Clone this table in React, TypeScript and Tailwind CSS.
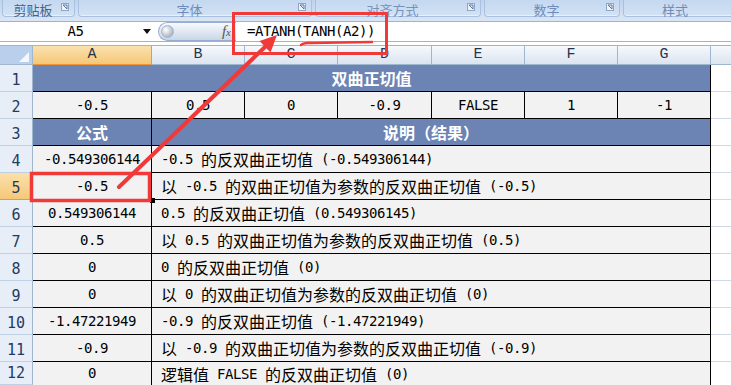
import { Fragment } from 'react'

const MONO = "font-['DejaVu_Sans_Mono','Noto_Sans_CJK_SC',monospace]"
const CJK_SPLIT = /([\u3000-\u303f\u4e00-\u9fff\uff00-\uffef]+)/

const groups = [
  { label: '剪贴板', width: 'w-[73px]', tone: 'text-[#43628d]', launcher: true },
  { label: '字体', width: 'w-[234px]', tone: 'text-[#6f8cb8]', launcher: true },
  { label: '对齐方式', width: 'w-[166px]', tone: 'text-[#7592bd]', launcher: true },
  { label: '数字', width: 'w-[136px]', tone: 'text-[#6f8cb8]', launcher: true },
  { label: '样式', width: 'flex-1 -mr-[10px]', tone: 'text-[#6f8cb8]', launcher: false },
]

const columns = ['A', 'B', 'C', 'D', 'E', 'F', 'G']
const inputs = ['-0.5', '0.5', '0', '-0.9', 'FALSE', '1', '-1']

const results: [string, string][] = [
  ['-0.549306144', '-0.5 的反双曲正切值 (-0.549306144)'],
  ['-0.5', '以 -0.5 的双曲正切值为参数的反双曲正切值 (-0.5)'],
  ['0.549306144', '0.5 的反双曲正切值 (0.549306145)'],
  ['0.5', '以 0.5 的双曲正切值为参数的反双曲正切值 (0.5)'],
  ['0', '0 的反双曲正切值 (0)'],
  ['0', '以 0 的双曲正切值为参数的反双曲正切值 (0)'],
  ['-1.47221949', '-0.9 的反双曲正切值 (-1.47221949)'],
  ['-0.9', '以 -0.9 的双曲正切值为参数的反双曲正切值 (-0.9)'],
  ['0', '逻辑值 FALSE 的反双曲正切值 (0)'],
]

// half-width text in the mono face, CJK runs bumped to full width
function Mixed({ text }: { text: string }) {
  return (
    <>
      {text.split(CJK_SPLIT).map((part, i) =>
        i % 2 === 1 ? (
          <span key={i} className="text-[16px] tracking-normal font-['Noto_Sans_CJK_SC',sans-serif]">
            {part}
          </span>
        ) : (
          <span key={i} className="whitespace-pre">
            {part}
          </span>
        )
      )}
    </>
  )
}

function Launcher() {
  return (
    <svg className="w-[8px] h-[8px] mr-[5px] mt-[3px]" viewBox="0 0 8 8">
      <rect x="0.5" y="0.5" width="7" height="7" fill="#eef3fa" stroke="#8ea6c6" />
      <path d="M2 2h4v4" fill="none" stroke="#5d7699" />
      <path d="M2 2l4 4" stroke="#5d7699" />
    </svg>
  )
}

function RowNum({ n, active }: { n: number; active?: boolean }) {
  return (
    <div
      className={
        active
          ? 'flex items-end justify-center pb-[3px] border-r border-b border-[#f29536] bg-linear-to-b from-[#fbe0ab] to-[#f5c878] text-[15px] leading-[15px] text-[#1f3b5f]'
          : 'flex items-end justify-center pb-[3px] border-r border-b border-r-[#9eb6ce] border-b-[#c0d1e6] bg-[#e8eef8] text-[15px] leading-[15px] text-[#1f3b5f]'
      }
    >
      {n}
    </div>
  )
}

function Spare({ last }: { last?: boolean }) {
  return <div className={last ? 'bg-white' : 'border-b border-[#d0d7e5] bg-white'} />
}

export default function App() {
  return (
    <div className="relative w-[731px] h-[385px] overflow-hidden bg-white font-['Liberation_Sans','Noto_Sans_CJK_SC',sans-serif]">
      {/* ribbon group captions */}
      <div className="h-[21px] flex items-start gap-[3px] px-[2px] bg-linear-to-b from-[#bfd3ec] to-[#dbe6f4]">
        {groups.map((g) => (
          <div
            key={g.label}
            className={`${g.width} h-[17px] flex items-start rounded-b-[4px] border border-t-0 border-[#a9c1e0] bg-linear-to-b from-[#c4d8f0] to-[#d3e2f5] shadow-[inset_0_-1px_0_#e8f0fa]`}
          >
            <span
              className={`flex-1 pt-[1px] text-center text-[13px] leading-[17px] font-['Noto_Sans_CJK_SC',sans-serif] ${g.tone} ${g.launcher ? 'pl-[2px]' : 'pr-[12px]'}`}
            >
              {g.label}
            </span>
            {g.launcher && <Launcher />}
          </div>
        ))}
      </div>

      {/* name box + formula bar */}
      <div className="h-[21px] flex border-t border-b border-[#9db4d0] bg-white">
        <div className="w-[158px] flex items-center">
          <span className={`flex-1 text-center pl-[8px] text-[14px] tracking-[-0.4px] text-black ${MONO}`}>A5</span>
          <svg className="w-[8px] h-[5px] mr-[7px]" viewBox="0 0 8 5">
            <path d="M0 0h8L4 5z" fill="#111" />
          </svg>
        </div>
        <div className="w-[78px] h-[19px] flex items-center justify-between rounded-l-full border border-r-0 border-[#95add0] bg-linear-to-b from-[#f8fafd] to-[#c9d6e8]">
          <div className="ml-[2px] w-[13px] h-[13px] rounded-full border border-[#a5b4c8] bg-radial-[at_35%_35%] from-[#ffffff] to-[#8f9bab]" />
          <span className="mr-[5px] italic font-['Liberation_Serif',serif] text-[15px] leading-[15px] text-[#555]">
            f<span className="text-[11px]">x</span>
          </span>
        </div>
        <div className={`flex-1 flex items-center pl-[11px] text-[14px] tracking-[-0.43px] text-black ${MONO}`}>
          =ATANH(TANH(A2))
        </div>
      </div>

      <div className="h-[3px]" />

      {/* sheet; the last row runs off the bottom of the window */}
      <div className={`grid grid-cols-[33px_119px_93px_93px_94px_93px_93px_93px_20px] grid-rows-[20px_repeat(11,27px)_23px] ${MONO}`}>
        <div className="border-t border-r border-b border-[#9eb6ce] bg-[#b9cfeb] flex items-end justify-end pr-[3px] pb-[2px]">
          <svg className="w-[10px] h-[10px]" viewBox="0 0 10 10">
            <path d="M10 0v10H0z" fill="#f4f7fb" />
          </svg>
        </div>
        {columns.map((c) => (
          <div
            key={c}
            className={
              c === 'A'
                ? "flex items-center justify-center border-t border-r border-b border-t-[#9eb6ce] border-[#f29536] bg-linear-to-b from-[#fbe1ae] to-[#f5c776] text-[15px] text-[#1f3550] font-['Liberation_Mono',monospace]"
                : "flex items-center justify-center border-t border-r border-b border-[#9eb6ce] bg-linear-to-b from-[#f6f9fc] to-[#dbe4f0] text-[15px] text-[#1f3550] font-['Liberation_Mono',monospace]"
            }
          >
            {c}
          </div>
        ))}
        <div className="border-t border-b border-[#9eb6ce] bg-linear-to-b from-[#f6f9fc] to-[#dbe4f0]" />

        {/* row 1 */}
        <RowNum n={1} />
        <div className="col-span-7 flex items-center justify-center border-r border-b border-black bg-[#6c84b4] text-white text-[16px] font-bold font-['Noto_Sans_CJK_SC',sans-serif]">
          双曲正切值
        </div>
        <Spare />

        {/* row 2 */}
        <RowNum n={2} />
        {inputs.map((v, i) => (
          <div
            key={i}
            className="flex items-center justify-center border-r border-b border-black bg-[#f2f2f2] text-[14px] tracking-[-0.43px] text-black"
          >
            {v}
          </div>
        ))}
        <Spare />

        {/* row 3 */}
        <RowNum n={3} />
        <div className="flex items-center justify-center border-r border-b border-black bg-[#6c84b4] text-white text-[16px] font-bold font-['Noto_Sans_CJK_SC',sans-serif]">
          公式
        </div>
        <div className="col-span-6 flex items-center justify-center border-r border-b border-black bg-[#6c84b4] text-white text-[16px] font-bold font-['Noto_Sans_CJK_SC',sans-serif]">
          说明（结果）
        </div>
        <Spare />

        {results.map(([value, note], i) => {
          const last = i === results.length - 1
          return (
            <Fragment key={i}>
              <RowNum n={i + 4} active={i + 4 === 5} />
              <div
                className={`flex items-center justify-center border-r border-black bg-[#f2f2f2] text-[14px] tracking-[-0.43px] text-black ${last ? '' : 'border-b'}`}
              >
                {value}
              </div>
              <div
                className={`col-span-6 flex items-center pl-[9px] border-r border-black bg-[#f2f2f2] text-[14px] tracking-[-0.43px] leading-[16px] text-black whitespace-nowrap ${last ? '' : 'border-b'}`}
              >
                <Mixed text={note} />
              </div>
              <Spare last={last} />
            </Fragment>
          )
        })}
      </div>

      {/* red callout marks drawn over the sheet */}
      <svg className="absolute inset-0 pointer-events-none" width="731" height="385" viewBox="0 0 731 385">
        <rect x="150" y="198" width="5" height="5" fill="#000" />
        <rect x="233.5" y="13.5" width="153" height="40" fill="none" stroke="#f03a3a" strokeWidth="3" />
        <rect x="31.5" y="173.5" width="118" height="27" fill="none" stroke="#f03a3a" strokeWidth="3.5" />
        <path d="M301 45 Q303 42.5 310 43 L372 42" fill="none" stroke="#f03a3a" strokeWidth="2.5" strokeLinecap="round" />
        <path d="M119 187 L265 47" stroke="#f03a3a" strokeWidth="4" strokeLinecap="round" />
        <path d="M277 35 L270.5 52.5 L259.5 41 Z" fill="#f03a3a" />
      </svg>
    </div>
  )
}
